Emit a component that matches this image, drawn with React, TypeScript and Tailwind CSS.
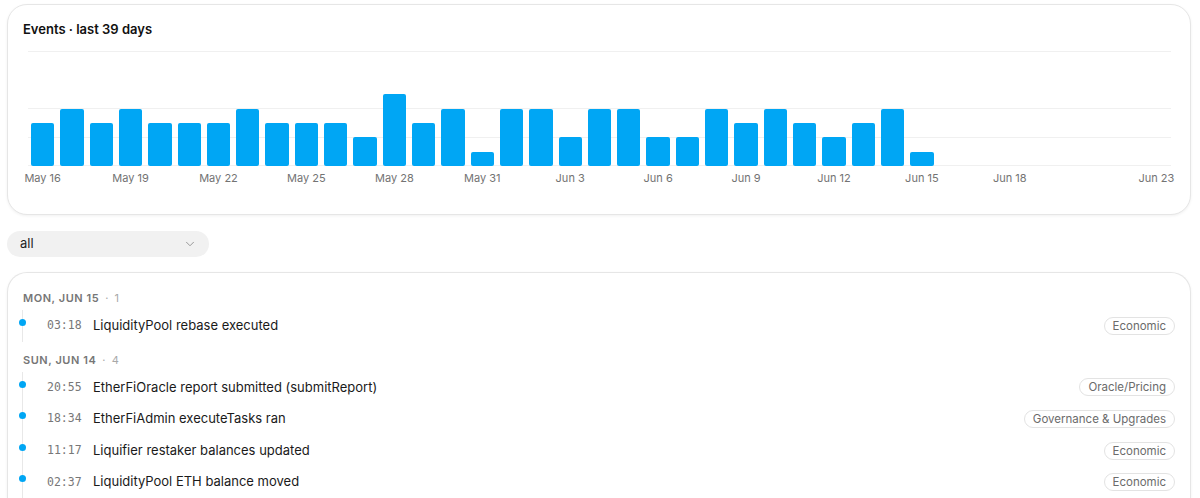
import React from "react";
import { ChevronDown } from "lucide-react";

const values = [3,4,3,4,3,3,3,4,3,3,3,2,5,3,4,1,4,4,2,4,4,2,2,4,3,4,3,2,3,4,1,0,0,0,0,0,0,0,0];
const labels: Record<number, string> = {
  0: "May 16", 3: "May 19", 6: "May 22", 9: "May 25", 12: "May 28", 15: "May 31",
  18: "Jun 3", 21: "Jun 6", 24: "Jun 9", 27: "Jun 12", 30: "Jun 15", 33: "Jun 18", 38: "Jun 23",
};

const groups = [
  {
    day: "MON, JUN 15",
    count: 1,
    rows: [{ t: "03:18", title: "LiquidityPool rebase executed", tag: "Economic" }],
  },
  {
    day: "SUN, JUN 14",
    count: 4,
    rows: [
      { t: "20:55", title: "EtherFiOracle report submitted (submitReport)", tag: "Oracle/Pricing" },
      { t: "18:34", title: "EtherFiAdmin executeTasks ran", tag: "Governance & Upgrades" },
      { t: "11:17", title: "Liquifier restaker balances updated", tag: "Economic" },
      { t: "02:37", title: "LiquidityPool ETH balance moved", tag: "Economic" },
    ],
  },
];

const H = 115;

export default function App() {
  return (
    <div
      className="min-h-[498px] bg-white pl-[7px] pr-[9px] pt-[4px] text-[#1a1a1a]"
      style={{ fontFamily: "Inter, 'Liberation Sans', sans-serif" }}
    >
      <div className="rounded-[20px] border border-[#e6e6e6] bg-white px-[15px] pb-[29px] pt-[14px] shadow-[0_1px_3px_rgba(0,0,0,0.06)]">
        <div className="text-[13px] font-semibold leading-[20px] text-[#111]">Events · last 39 days</div>
        <div className="ml-[5px] mr-[4px] mt-[12px]">
          <div className="relative h-[115px]">
            <div className="absolute left-0 right-0 top-0 h-px bg-[#f0f0f0]" />
            <div className="absolute left-0 right-0 top-[57px] h-px bg-[#f0f0f0]" />
            <div className="absolute left-0 right-0 top-[86px] h-px bg-[#f0f0f0]" />
            <div className="absolute bottom-0 left-0 right-0 h-px bg-[#f0f0f0]" />
            <div className="relative grid h-full grid-cols-[repeat(39,minmax(0,1fr))] items-end">
              {values.map((v, i) => (
                <div key={i} className="flex h-full items-end px-[3px]">
                  {v > 0 && (
                    <div className="w-full rounded-[2px] bg-[#00a6f4]" style={{ height: (v * H) / 8 }} />
                  )}
                </div>
              ))}
            </div>
          </div>
          <div className="mt-[5px] grid grid-cols-[repeat(39,minmax(0,1fr))] text-[11px] leading-[14px] text-[#737373]">
            {values.map((_, i) => (
              <div key={i} className="flex justify-center whitespace-nowrap">
                {labels[i] ? <span>{labels[i]}</span> : null}
              </div>
            ))}
          </div>
        </div>
      </div>

      <div className="mt-[16px] flex h-[26px] w-[202px] items-center justify-between rounded-full bg-[#f1f1f1] pl-[13px] pr-[12px]">
        <span className="text-[13px] text-[#1f1f1f]">all</span>
        <ChevronDown size={14} strokeWidth={1.5} className="text-[#8a8a8a]" />
      </div>

      <div className="mt-[15px] rounded-t-[20px] border border-b-0 border-[#e6e6e6] bg-white px-[15px] pt-[17px] shadow-[0_1px_3px_rgba(0,0,0,0.06)]">
        {groups.map((g, gi) => (
          <div key={gi} className={gi > 0 ? "mt-[10px]" : ""}>
            <div className="flex items-center text-[11px] leading-[16px]">
              <span className="font-semibold tracking-[0.05em] text-[#767676]">{g.day}</span>
              <span className="ml-[6px] text-[#a8a8a8]">·&nbsp;&nbsp;{g.count}</span>
            </div>
            <div className="-ml-[1px] mt-[4px] border-l border-[#e8e8e8]">
              {g.rows.map((r, ri) => (
                <div key={ri} className="relative flex h-[31.6px] items-center pl-[24px]">
                  <span className="absolute left-[-4px] top-[9px] h-[7px] w-[7px] rounded-full bg-[#00a6f4]" />
                  <span
                    className="w-[34px] text-[11.5px] text-[#777]"
                    style={{ fontFamily: "'DejaVu Sans Mono', 'Liberation Mono', monospace" }}
                  >
                    {r.t}
                  </span>
                  <span className="ml-[12px] flex-1 text-[13px] text-[#1a1a1a]">{r.title}</span>
                  <span className="rounded-full border border-[#e3e3e3] px-[8px] text-[11.5px] leading-[16px] text-[#6b6b6b]">
                    {r.tag}
                  </span>
                </div>
              ))}
            </div>
          </div>
        ))}
      </div>
    </div>
  );
}
